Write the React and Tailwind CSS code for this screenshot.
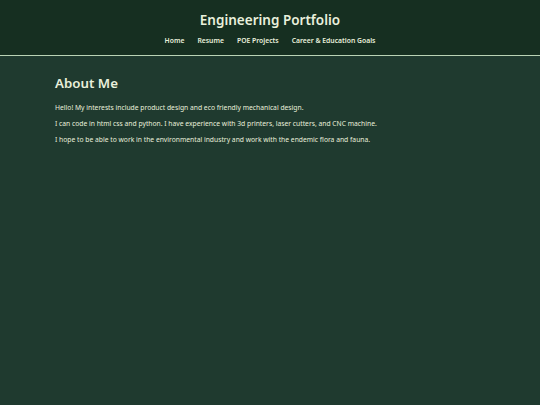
import React from "react";

const links = ["Home", "Resume", "POE Projects", "Career & Education Goals"];

export default function App() {
  return (
    <div
      className="min-h-[405px] bg-[#1f3a2f] text-[#e9f0dc]"
      style={{ fontFamily: '"Noto Sans", "Open Sans", sans-serif' }}
    >
      <header className="bg-[#162f21] border-b border-[#b9d3b5] pt-[11px] pb-[9px] text-center">
        <h1 className="text-[13.5px] font-semibold leading-[19px]">Engineering Portfolio</h1>
        <nav className="mt-[6px] flex justify-center gap-[13px] text-[6.8px] font-semibold leading-[10px]">
          {links.map((l) => (
            <a key={l} href="#" className="text-[#e9f0dc]">
              {l}
            </a>
          ))}
        </nav>
      </header>
      <main className="px-[55px] pt-[17px]">
        <h2 className="text-[13.3px] font-semibold leading-[20px] mb-[10px]">About Me</h2>
        <div className="flex flex-col gap-[6px] text-[6.75px] leading-[10px]">
          <p>Hello! My interests include product design and eco friendly mechanical design.</p>
          <p>I can code in html css and python. I have experience with 3d printers, laser cutters, and CNC machine.</p>
          <p>I hope to be able to work in the environmental industry and work with the endemic flora and fauna.</p>
        </div>
      </main>
    </div>
  );
}
